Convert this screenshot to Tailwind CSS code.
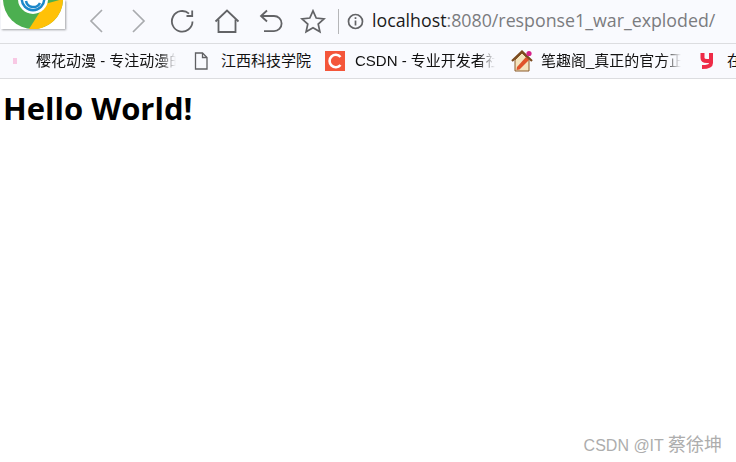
<!DOCTYPE html>
<html>
<head>
<meta charset="utf-8">
<script src="https://cdn.jsdelivr.net/npm/@tailwindcss/browser@4"></script>
</head>
<body class="bg-white w-[736px] h-[462px] overflow-hidden relative font-['Liberation_Sans','Noto_Sans_CJK_SC',sans-serif]">
  <div class="h-[44px] bg-[#f9fafe] border-b border-[#dcdde0] flex items-center relative">
    <div class="absolute left-[1px] top-0 w-[64px] h-[29px] bg-white shadow-[1px_1px_2px_rgba(0,0,0,0.35)] overflow-hidden">
      <svg width="64" height="29" viewBox="0 0 64 29">
        <circle cx="32" cy="-1" r="30" fill="#4caf50"/>
        <path d="M28 29 L44 4 L62 -1 A30 30 0 0 1 28 29Z" fill="#ffc107"/>
        <circle cx="32" cy="-1" r="15" fill="#fff"/>
        <circle cx="32" cy="-1" r="12.5" fill="#1b87c9"/>
        <circle cx="32" cy="-1" r="10" fill="#fff"/>
        <path d="M25 1 A7.5 7.5 0 0 0 39 3" fill="none" stroke="#1b87c9" stroke-width="2.5"/>
      </svg>
    </div>
    <div class="ml-[89px] flex items-center mt-[-1px]">
      <svg width="14" height="24" viewBox="0 0 14 24" fill="none" stroke="#a9abae" stroke-width="1.7" class="mr-[29px]"><path d="M13 1 L2 12 L13 23"/></svg>
      <svg width="14" height="24" viewBox="0 0 14 24" fill="none" stroke="#a9abae" stroke-width="1.7" class="mr-[24px]"><path d="M1 1 L12 12 L1 23"/></svg>
      <svg width="25" height="25" viewBox="0 0 25 25" fill="none" stroke="#626366" stroke-width="1.8" class="mr-[19px]"><path d="M22.5 12.5 A10.3 10.3 0 1 1 19 4.6"/><path d="M22.2 1.5 V7 H16.5"/></svg>
      <svg width="26" height="25" viewBox="0 0 26 25" fill="none" stroke="#626366" stroke-width="1.8" class="mr-[19px]"><path d="M1.5 12.5 L13 1.5 L24.5 12.5"/><path d="M4.5 10.5 V23 H21.5 V10.5"/></svg>
      <svg width="24" height="24" viewBox="0 0 24 24" fill="none" stroke="#626366" stroke-width="1.8" class="mr-[17px]"><path d="M2 7 H15 A7.6 7.6 0 0 1 15 22.2 H5"/><path d="M8 1.5 L2 7 L8 12.5"/></svg>
      <svg width="26" height="25" viewBox="0 0 26 25" fill="none" stroke="#626366" stroke-width="1.7" class="mr-[12px]"><path d="M13 1.8 L16.2 9 L24 9.8 L18.2 15 L19.9 22.8 L13 18.8 L6.1 22.8 L7.8 15 L2 9.8 L9.8 9Z"/></svg>
      <div class="w-px h-[25px] bg-[#b5b6b8] mr-[8px]"></div>
      <svg width="17" height="17" viewBox="0 0 17 17" fill="none" stroke="#626366" stroke-width="1.7" class="mr-[8px]"><circle cx="8.5" cy="8.5" r="7"/><path d="M8.5 7.5 V12.5"/><path d="M8.5 4.2 V6"/></svg>
      <div class="font-['Open_Sans',sans-serif] text-[17.8px] leading-none whitespace-nowrap text-[#7b7c7f]"><span class="text-[#1b1b1b]">localhost</span>:8080/response1_war_exploded/</div>
    </div>
  </div>
  <div class="h-[35px] bg-[#f9fafe] border-b border-[#dcdde0] flex items-center text-[15px] leading-[20px] text-[#111] whitespace-nowrap overflow-hidden pb-[1px]">
    <div class="shrink-0 w-[4px] h-[6px] ml-[13px] mr-[19px] bg-[#f8c8e4]"></div>
    <div class="shrink-0 w-[140px] overflow-hidden mr-[18px] mask-r-from-[88%] mask-r-to-100%">樱花动漫 - 专注动漫的</div>
    <svg width="14" height="18" viewBox="0 0 14 18" fill="none" stroke="#5f6063" stroke-width="1.3" class="shrink-0 mr-[13px]"><path d="M1.5 1 H8.5 L13 5.5 V17 H1.5Z"/><path d="M8.5 1 V5.5 H13"/></svg>
    <div class="shrink-0 mr-[14px]">江西科技学院</div>
    <div class="shrink-0 w-[20px] h-[20px] bg-[#f4563a] flex items-center justify-center mr-[10px]">
      <svg width="16" height="16" viewBox="0 0 16 16" fill="none" stroke="#fff" stroke-width="2.6"><path d="M13.5 4 A6.2 6.2 0 1 0 13.5 12"/></svg>
    </div>
    <div class="shrink-0 w-[140px] overflow-hidden mr-[16px] mask-r-from-[88%] mask-r-to-100%">CSDN - 专业开发者社</div>
    <svg width="22" height="22" viewBox="0 0 22 22" class="shrink-0 mr-[8px]">
      <path d="M4 10 V21 H18 V10 L11 3Z" fill="#f4e3bd" stroke="#8b5a2b" stroke-width="1"/>
      <path d="M1 11 L11 1.5 L21 11" fill="none" stroke="#7a4a1e" stroke-width="2.2"/>
      <path d="M6 17 L15 7 L18 10 L8.5 19.5 L5.5 20Z" fill="#e0532a"/>
      <circle cx="18" cy="3.5" r="2.6" fill="#d6238a"/>
    </svg>
    <div class="shrink-0 w-[140px] overflow-hidden mr-[18px] mask-r-from-[88%] mask-r-to-100%">笔趣阁_真正的官方正</div>
    <svg width="16" height="16" viewBox="0 0 16 16" fill="none" stroke="#ee2b47" stroke-width="4" class="shrink-0 mr-[12px]"><path d="M3.5 0 V5 Q3.5 8 8 8 H12 M12 0 V10 Q12 14 3 14"/></svg>
    <div class="shrink-0">在</div>
  </div>
  <h1 class="font-['Open_Sans',sans-serif] font-bold text-[31px] leading-[36px] text-black ml-[3px] mt-[11px]">Hello World!</h1>
  <div class="absolute right-[14px] top-[434px] text-[16px] leading-[22px] text-[#adadad] whitespace-nowrap">CSDN @IT <span class="text-[18px]">蔡徐坤</span></div>
</body>
</html>
